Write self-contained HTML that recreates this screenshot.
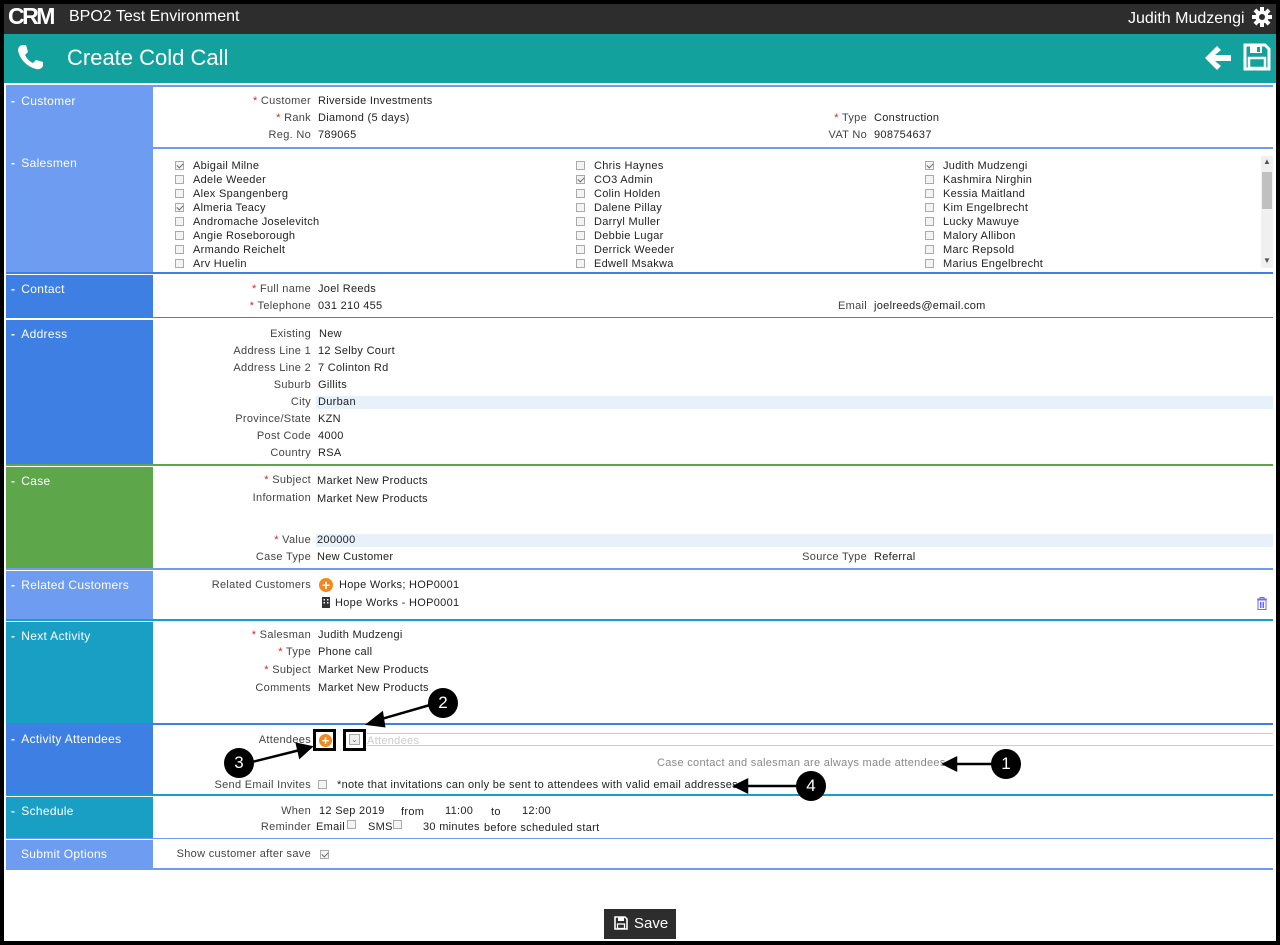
<!DOCTYPE html>
<html><head><meta charset="utf-8">
<style>
*{margin:0;padding:0;box-sizing:border-box}
html,body{width:1280px;height:945px;overflow:hidden;background:#fff}
body{position:relative;font-family:"Liberation Sans",Verdana,sans-serif;font-size:11px;color:#222;letter-spacing:0.3px}
.a{position:absolute;white-space:nowrap}
.L{position:absolute;left:0;width:311px;text-align:right;color:#444;white-space:nowrap;line-height:13px}
.V{position:absolute;left:318px;white-space:nowrap;line-height:13px;color:#222}
.s{color:#e02020}
.side{position:absolute;left:6px;width:147px;color:#fff;font-size:12px;padding:7px 0 0 5px}
.side b{font-weight:bold;margin-right:6px}
.ln{position:absolute;left:153px;width:1120px;height:2px}
.cb{position:absolute;width:9px;height:9px;border:1px solid #aaa;background:#f4f4f4}
.cb.k::after{content:"";position:absolute;left:2px;top:0px;width:3px;height:5px;border:solid #666;border-width:0 1px 1px 0;transform:rotate(45deg)}
.nm{position:absolute;line-height:13px;color:#222;white-space:nowrap}
.num{position:absolute;width:30px;height:30px;border-radius:50%;background:#000;color:#fff;font-size:17px;text-align:center;line-height:30px;letter-spacing:0}
</style></head><body>
<div class="a" style="left:0;top:0;width:1280px;height:945px;border:4px solid #000"></div>
<div class="a" style="left:4px;top:4px;width:1272px;height:30px;background:#2d2d2d"></div>
<div class="a" style="left:8px;top:5px;font-size:23px;font-weight:bold;color:#fff;letter-spacing:-2.5px;line-height:23px">CRM</div>
<div class="a" style="left:69px;top:8px;font-size:16px;color:#fff;letter-spacing:0">BPO2 Test Environment</div>
<div class="a" style="left:1128px;top:10px;font-size:16px;color:#fff;letter-spacing:0">Judith Mudzengi</div>
<svg class="a" style="left:1252px;top:7px" width="20" height="20" viewBox="0 0 20 20"><g fill="#fff"><circle cx="10" cy="10" r="6.5"/><rect x="8" y="0" width="4" height="20"/><rect x="0" y="8" width="20" height="4"/><rect x="8" y="0" width="4" height="20" transform="rotate(45 10 10)"/><rect x="8" y="0" width="4" height="20" transform="rotate(-45 10 10)"/></g><circle cx="10" cy="10" r="3" fill="#2d2d2d"/></svg>
<div class="a" style="left:4px;top:34px;width:1272px;height:49px;background:#13a19d"></div>
<svg class="a" style="left:16px;top:43px" width="28" height="28" viewBox="0 0 28 28"><path d="M6 2 L10 2 L12 9 L9 12 Q12 18 17 20 L20 17 L27 19 L27 23 Q25 27 20 26 Q6 22 2 8 Q2 3 6 2Z" fill="#fff"/></svg>
<div class="a" style="left:67px;top:45px;font-size:22px;color:#fff;letter-spacing:0">Create Cold Call</div>
<svg class="a" style="left:1204px;top:45px" width="28" height="26" viewBox="0 0 28 26"><path d="M13 1 L17 5 L11 10 L27 10 L27 16 L11 16 L17 21 L13 25 L1 13Z" fill="#fff"/></svg>
<svg class="a" style="left:1243px;top:43px" width="28" height="28" viewBox="0 0 28 28"><path d="M2 2 H22 L26 6 V26 H2Z" fill="none" stroke="#fff" stroke-width="3"/><rect x="7" y="3" width="12" height="7" fill="#fff"/><rect x="14" y="4" width="3" height="5" fill="#13a19d"/><rect x="6" y="15" width="16" height="10" fill="none" stroke="#fff" stroke-width="2.5"/></svg>

<div class="ln" style="top:85px;background:#6d9cf0;left:6px;width:1267px"></div>
<div class="side" style="top:87px;height:60px;background:#6d9cf0"><b>-</b>Customer</div>
<div class="ln" style="top:147px;background:#6d9cf0;left:6px;width:1267px"></div>
<div class="side" style="top:149px;height:123px;background:#6d9cf0"><b>-</b>Salesmen</div>
<div class="ln" style="top:272px;background:#3d7fe3;left:6px;width:1267px"></div>
<div class="side" style="top:275px;height:43px;background:#3d7fe3"><b>-</b>Contact</div>
<div class="ln" style="top:317px;background:#3d7fe3;left:6px;width:1267px;height:1px"></div>
<div class="side" style="top:320px;height:144px;background:#3d7fe3"><b>-</b>Address</div>
<div class="ln" style="top:464px;background:#5ea64a;left:6px;width:1267px"></div>
<div class="side" style="top:467px;height:101px;background:#5ea64a"><b>-</b>Case</div>
<div class="ln" style="top:568px;background:#6d9cf0;left:6px;width:1267px"></div>
<div class="side" style="top:571px;height:49px;background:#6d9cf0"><b>-</b>Related Customers</div>
<div class="ln" style="top:619px;background:#1a9fc4;left:6px;width:1267px"></div>
<div class="side" style="top:622px;height:101px;background:#1a9fc4"><b>-</b>Next Activity</div>
<div class="ln" style="top:723px;background:#3d7fe3;left:6px;width:1267px"></div>
<div class="side" style="top:725px;height:69px;background:#3d7fe3"><b>-</b>Activity Attendees</div>
<div class="ln" style="top:794px;background:#1a9fc4;left:6px;width:1267px"></div>
<div class="side" style="top:797px;height:41px;background:#1a9fc4"><b>-</b>Schedule</div>
<div class="ln" style="top:838px;background:#6d9cf0;left:6px;width:1267px;height:1px"></div>
<div class="side" style="top:840px;height:29px;background:#6d9cf0;padding-left:15px">Submit Options</div>
<div class="ln" style="top:868px;background:#6d9cf0;left:6px;width:1267px"></div>

<div class="L" style="top:95px"><span class="s">*</span> Customer</div><div class="V" style="top:95px">Riverside Investments</div>
<div class="L" style="top:112px"><span class="s">*</span> Rank</div><div class="V" style="top:112px">Diamond (5 days)</div>
<div class="L" style="top:129px">Reg. No</div><div class="V" style="top:129px">789065</div>
<div class="L" style="top:112px;width:867px"><span class="s">*</span> Type</div><div class="V" style="top:112px;left:874px">Construction</div>
<div class="L" style="top:129px;width:867px">VAT No</div><div class="V" style="top:129px;left:874px">908754637</div>

<div class="a" style="left:1261px;top:156px;width:12px;height:112px;background:#f0f0f0"></div>
<div class="a" style="left:1262px;top:172px;width:10px;height:37px;background:#c0c0c0"></div>
<div class="a" style="left:1263px;top:157px;font-size:8px;color:#555">▲</div>
<div class="a" style="left:1263px;top:256px;font-size:8px;color:#555">▼</div>
<div class="cb k" style="left:175px;top:161px"></div><div class="nm" style="left:193px;top:160px">Abigail Milne</div>
<div class="cb" style="left:175px;top:175px"></div><div class="nm" style="left:193px;top:174px">Adele Weeder</div>
<div class="cb" style="left:175px;top:189px"></div><div class="nm" style="left:193px;top:188px">Alex Spangenberg</div>
<div class="cb k" style="left:175px;top:203px"></div><div class="nm" style="left:193px;top:202px">Almeria Teacy</div>
<div class="cb" style="left:175px;top:217px"></div><div class="nm" style="left:193px;top:216px">Andromache Joselevitch</div>
<div class="cb" style="left:175px;top:231px"></div><div class="nm" style="left:193px;top:230px">Angie Roseborough</div>
<div class="cb" style="left:175px;top:245px"></div><div class="nm" style="left:193px;top:244px">Armando Reichelt</div>
<div class="cb" style="left:175px;top:259px"></div><div class="nm" style="left:193px;top:258px">Arv Huelin</div>
<div class="cb" style="left:576px;top:161px"></div><div class="nm" style="left:594px;top:160px">Chris Haynes</div>
<div class="cb k" style="left:576px;top:175px"></div><div class="nm" style="left:594px;top:174px">CO3 Admin</div>
<div class="cb" style="left:576px;top:189px"></div><div class="nm" style="left:594px;top:188px">Colin Holden</div>
<div class="cb" style="left:576px;top:203px"></div><div class="nm" style="left:594px;top:202px">Dalene Pillay</div>
<div class="cb" style="left:576px;top:217px"></div><div class="nm" style="left:594px;top:216px">Darryl Muller</div>
<div class="cb" style="left:576px;top:231px"></div><div class="nm" style="left:594px;top:230px">Debbie Lugar</div>
<div class="cb" style="left:576px;top:245px"></div><div class="nm" style="left:594px;top:244px">Derrick Weeder</div>
<div class="cb" style="left:576px;top:259px"></div><div class="nm" style="left:594px;top:258px">Edwell Msakwa</div>
<div class="cb k" style="left:925px;top:161px"></div><div class="nm" style="left:943px;top:160px">Judith Mudzengi</div>
<div class="cb" style="left:925px;top:175px"></div><div class="nm" style="left:943px;top:174px">Kashmira Nirghin</div>
<div class="cb" style="left:925px;top:189px"></div><div class="nm" style="left:943px;top:188px">Kessia Maitland</div>
<div class="cb" style="left:925px;top:203px"></div><div class="nm" style="left:943px;top:202px">Kim Engelbrecht</div>
<div class="cb" style="left:925px;top:217px"></div><div class="nm" style="left:943px;top:216px">Lucky Mawuye</div>
<div class="cb" style="left:925px;top:231px"></div><div class="nm" style="left:943px;top:230px">Malory Allibon</div>
<div class="cb" style="left:925px;top:245px"></div><div class="nm" style="left:943px;top:244px">Marc Repsold</div>
<div class="cb" style="left:925px;top:259px"></div><div class="nm" style="left:943px;top:258px">Marius Engelbrecht</div>

<div class="L" style="top:283px"><span class="s">*</span> Full name</div><div class="V" style="top:283px">Joel Reeds</div>
<div class="L" style="top:300px"><span class="s">*</span> Telephone</div><div class="V" style="top:300px">031 210 455</div>
<div class="L" style="top:300px;width:867px">Email</div><div class="V" style="top:300px;left:874px">joelreeds@email.com</div>

<div class="a" style="left:316px;top:396px;width:957px;height:13px;background:#e8f0fc"></div>
<div class="L" style="top:328px">Existing</div><div class="V" style="top:328px;left:319px">New</div>
<div class="L" style="top:345px">Address Line 1</div><div class="V" style="top:345px">12 Selby Court</div>
<div class="L" style="top:362px">Address Line 2</div><div class="V" style="top:362px">7 Colinton Rd</div>
<div class="L" style="top:379px">Suburb</div><div class="V" style="top:379px">Gillits</div>
<div class="L" style="top:396px">City</div><div class="V" style="top:396px">Durban</div>
<div class="L" style="top:413px">Province/State</div><div class="V" style="top:413px">KZN</div>
<div class="L" style="top:430px">Post Code</div><div class="V" style="top:430px">4000</div>
<div class="L" style="top:447px">Country</div><div class="V" style="top:447px">RSA</div>

<div class="a" style="left:316px;top:534px;width:957px;height:13px;background:#e8f0fc"></div>
<div class="L" style="top:474px"><span class="s">*</span> Subject</div><div class="V" style="top:475px;left:317px">Market New Products</div>
<div class="L" style="top:492px">Information</div><div class="V" style="top:493px;left:317px">Market New Products</div>
<div class="L" style="top:534px"><span class="s">*</span> Value</div><div class="V" style="top:534px;left:317px">200000</div>
<div class="L" style="top:551px">Case Type</div><div class="V" style="top:551px;left:317px">New Customer</div>
<div class="L" style="top:551px;width:867px">Source Type</div><div class="V" style="top:551px;left:874px">Referral</div>

<div class="L" style="top:579px">Related Customers</div>
<div class="a" style="left:319px;top:578px;width:14px;height:14px;border-radius:50%;background:#f08a1c;color:#fff;font-weight:bold;font-size:14px;line-height:14px;text-align:center;letter-spacing:0">+</div>
<div class="V" style="top:579px;left:339px">Hope Works; HOP0001</div>
<svg class="a" style="left:322px;top:597px" width="8" height="11" viewBox="0 0 8 11"><rect x="0" y="0" width="8" height="11" fill="#333"/><g fill="#fff"><rect x="1.5" y="2" width="1.5" height="1.5"/><rect x="5" y="2" width="1.5" height="1.5"/><rect x="1.5" y="5" width="1.5" height="1.5"/><rect x="5" y="5" width="1.5" height="1.5"/></g></svg>
<div class="V" style="top:597px;left:335px">Hope Works - HOP0001</div>
<svg class="a" style="left:1256px;top:597px" width="12" height="13" viewBox="0 0 12 13"><path d="M1 2H11M4 2V0.5H8V2M2 3H10V12.5H2Z M4.5 5V11M6 5V11M7.5 5V11" fill="none" stroke="#6a6af0" stroke-width="1"/></svg>

<div class="L" style="top:629px"><span class="s">*</span> Salesman</div><div class="V" style="top:629px">Judith Mudzengi</div>
<div class="L" style="top:646px"><span class="s">*</span> Type</div><div class="V" style="top:646px">Phone call</div>
<div class="L" style="top:664px"><span class="s">*</span> Subject</div><div class="V" style="top:664px">Market New Products</div>
<div class="L" style="top:682px">Comments</div><div class="V" style="top:682px">Market New Products</div>

<div class="L" style="top:734px">Attendees</div>
<div class="a" style="left:313px;top:729px;width:23px;height:22px;border:3px solid #000"></div>
<div class="a" style="left:319px;top:734px;width:13px;height:13px;border-radius:50%;background:#f08a1c;color:#fff;font-weight:bold;font-size:13px;line-height:13px;text-align:center;letter-spacing:0">+</div>
<div class="a" style="left:367px;top:733px;width:906px;height:13px;border-top:1px solid #ccc;border-bottom:1px solid #ccc"></div>
<div class="a" style="left:343px;top:729px;width:23px;height:22px;border:3px solid #000"></div>
<div class="a" style="left:349px;top:734px;width:11px;height:11px;border:1px solid #aaa;background:#eee;font-size:8px;color:#777;text-align:center;line-height:9px;letter-spacing:0">⌄</div>
<div class="a" style="left:367px;top:735px;color:#ccc">Attendees</div>
<div class="a" style="left:657px;top:757px;color:#888">Case contact and salesman are always made attendees</div>
<div class="L" style="top:779px">Send Email Invites</div>
<div class="cb" style="left:318px;top:780px"></div>
<div class="a" style="left:337px;top:779px">*note that invitations can only be sent to attendees with valid email addresses</div>
<svg class="a" style="left:0;top:0" width="1280" height="945" viewBox="0 0 1280 945">
<g stroke="#000" stroke-width="2.5" fill="#000">
<line x1="430" y1="705" x2="378" y2="720"/><polygon points="368,724 382,713 384,726"/>
<line x1="252" y1="762" x2="300" y2="750"/><polygon points="311,747 297,744 300,757"/>
<line x1="992" y1="764" x2="955" y2="764"/><polygon points="944,764 956,758 956,770"/>
<line x1="797" y1="786" x2="746" y2="786"/><polygon points="735,786 747,780 747,792"/>
</g></svg>
<div class="num" style="left:428px;top:688px">2</div>
<div class="num" style="left:224px;top:748px">3</div>
<div class="num" style="left:991px;top:749px">1</div>
<div class="num" style="left:796px;top:771px">4</div>

<div class="L" style="top:805px">When</div><div class="V" style="top:805px;left:319px">12 Sep 2019</div>
<div class="a" style="left:401px;top:806px">from</div>
<div class="a" style="left:445px;top:805px">11:00</div>
<div class="a" style="left:491px;top:806px">to</div>
<div class="a" style="left:522px;top:805px">12:00</div>
<div class="L" style="top:821px">Reminder</div>
<div class="a" style="left:316px;top:821px">Email</div><div class="cb" style="left:347px;top:820px"></div>
<div class="a" style="left:368px;top:821px">SMS</div><div class="cb" style="left:393px;top:820px"></div>
<div class="a" style="left:423px;top:821px">30 minutes</div>
<div class="a" style="left:484px;top:822px">before scheduled start</div>

<div class="L" style="top:848px">Show customer after save</div>
<div class="cb k" style="left:320px;top:850px"></div>

<div class="a" style="left:604px;top:909px;width:72px;height:30px;background:#2d2d2d;color:#fff;font-size:15px;line-height:30px;padding-left:30px;letter-spacing:0">Save</div>
<svg class="a" style="left:614px;top:916px" width="14" height="14" viewBox="0 0 14 14"><path d="M1 1H11L13 3V13H1Z" fill="none" stroke="#fff" stroke-width="1.6"/><rect x="4" y="1.5" width="6" height="3.5" fill="#fff"/><rect x="3.5" y="8" width="7" height="4.5" fill="none" stroke="#fff" stroke-width="1.3"/></svg>
</body></html>
